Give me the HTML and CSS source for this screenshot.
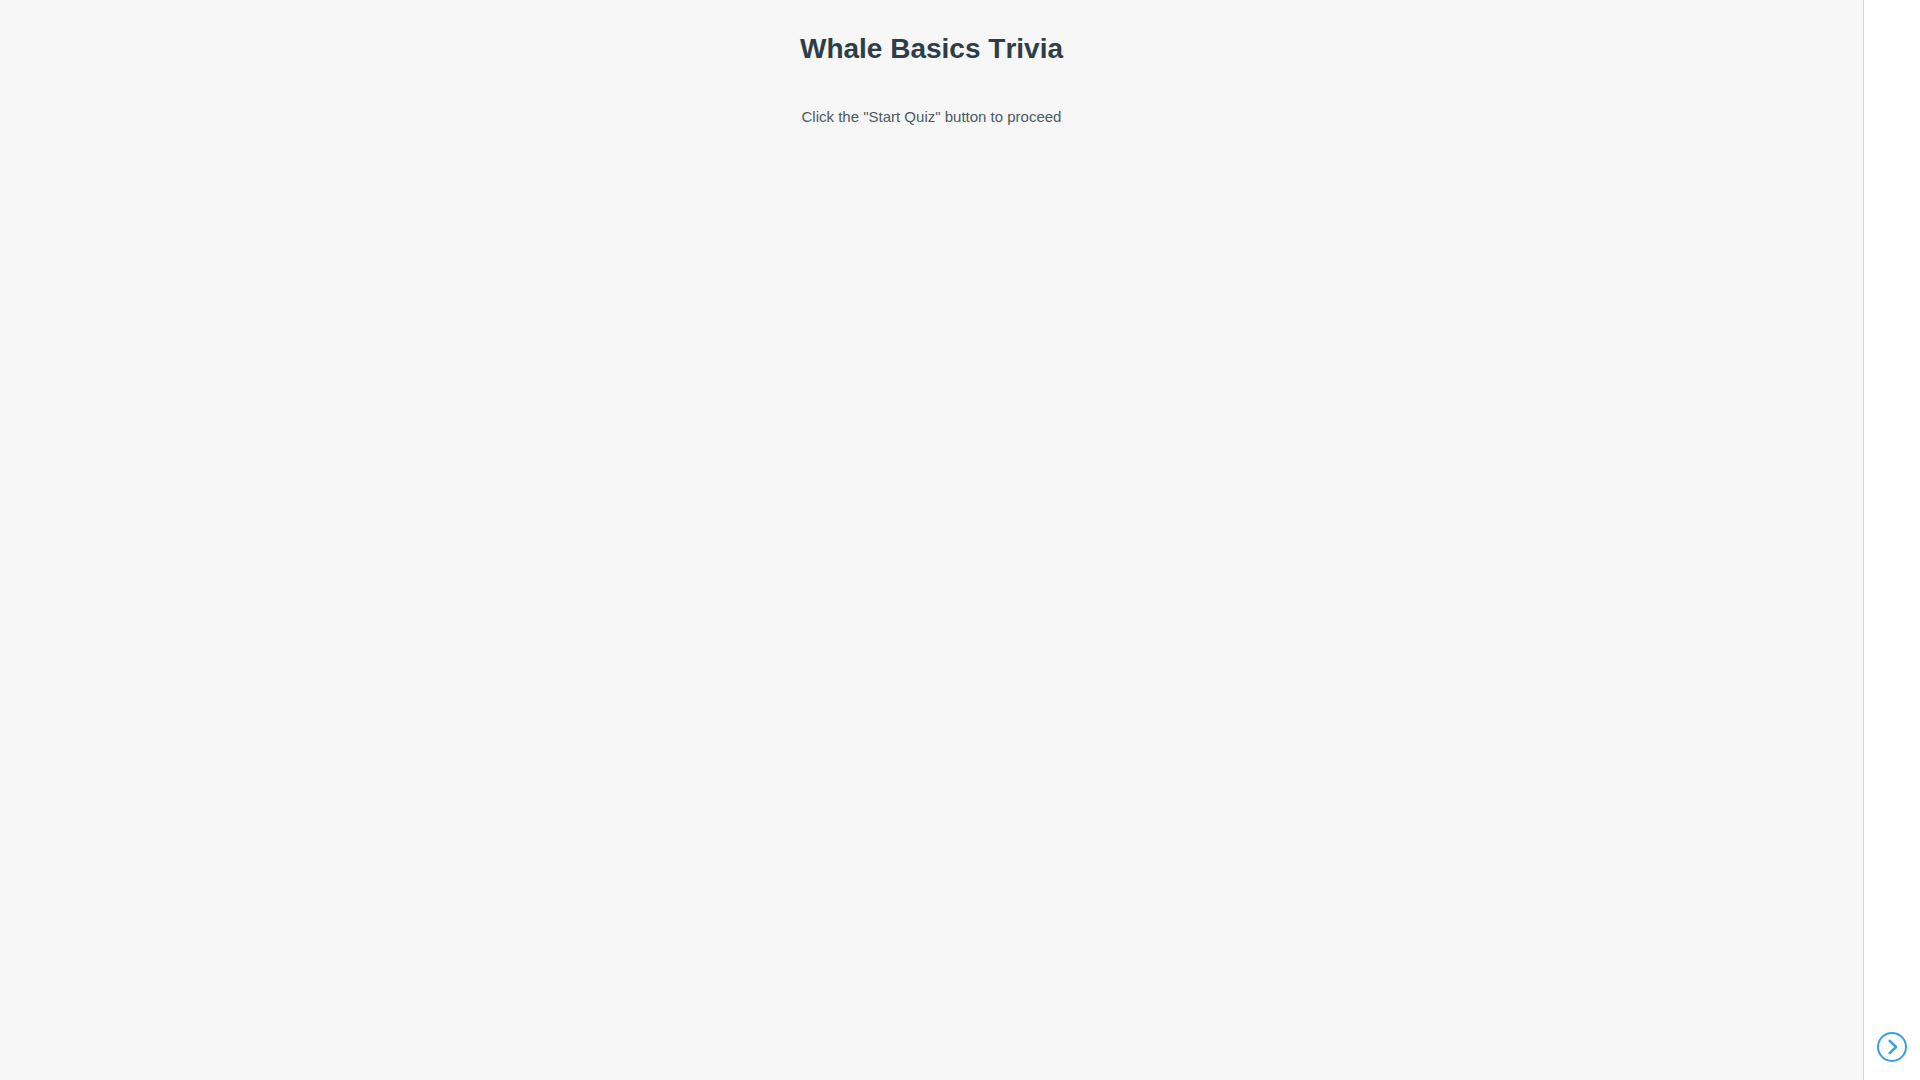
FILE: index.html
```
<!DOCTYPE html>
<html lang="en">
<head>
<meta charset="utf-8">
<meta name="viewport" content="width=device-width, initial-scale=1">
<title>Whale Basics Trivia</title>
<link rel="stylesheet" href="styles.css">
</head>
<body>
<main class="quiz">
  <h1 class="quiz-title">Whale Basics Trivia</h1>
  <p class="quiz-hint">Click the "Start Quiz" button to proceed</p>
</main>
<aside class="rail">
  <button class="next" type="button" aria-label="Start Quiz">
    <svg class="next-icon" viewBox="0 0 30 30" aria-hidden="true">
      <circle cx="15" cy="15" r="14"/>
      <path stroke-width="2.5" d="M12.700 8.900 19 15l-6.300 6.100"/>
    </svg>
  </button>
</aside>
</body>
</html>
```
FILE: styles.css
```
* {
  box-sizing: border-box;
}

body {
  display: flex;
  min-height: 100vh;
  margin: 0;
  background: #f7f7f7;
  font-family: "Liberation Sans", Arial, sans-serif;
  font-kerning: none;
}

.quiz {
  flex: 1;
  padding: 33px 24px;
  text-align: center;
}

.quiz-title {
  margin: 0 0 43px;
  color: #2d3e48;
  font-size: 28px;
  line-height: 32px;
}

.quiz-hint {
  margin: 0;
  color: #4c5a63;
  font-size: 15px;
  line-height: 18px;
}

.rail {
  display: flex;
  flex-direction: column;
  justify-content: flex-end;
  align-items: center;
  width: 57px;
  padding-bottom: 18px;
  border-left: 1px solid #d6d6d6;
  background: #ffffff;
}

.next {
  display: block;
  width: 30px;
  height: 30px;
  padding: 0;
  border: 0;
  background: none;
  cursor: pointer;
}

.next-icon {
  display: block;
  width: 100%;
  height: 100%;
  fill: none;
  stroke: #36a0e2;
  stroke-width: 2;
  stroke-linecap: round;
  stroke-linejoin: round;
}
```
